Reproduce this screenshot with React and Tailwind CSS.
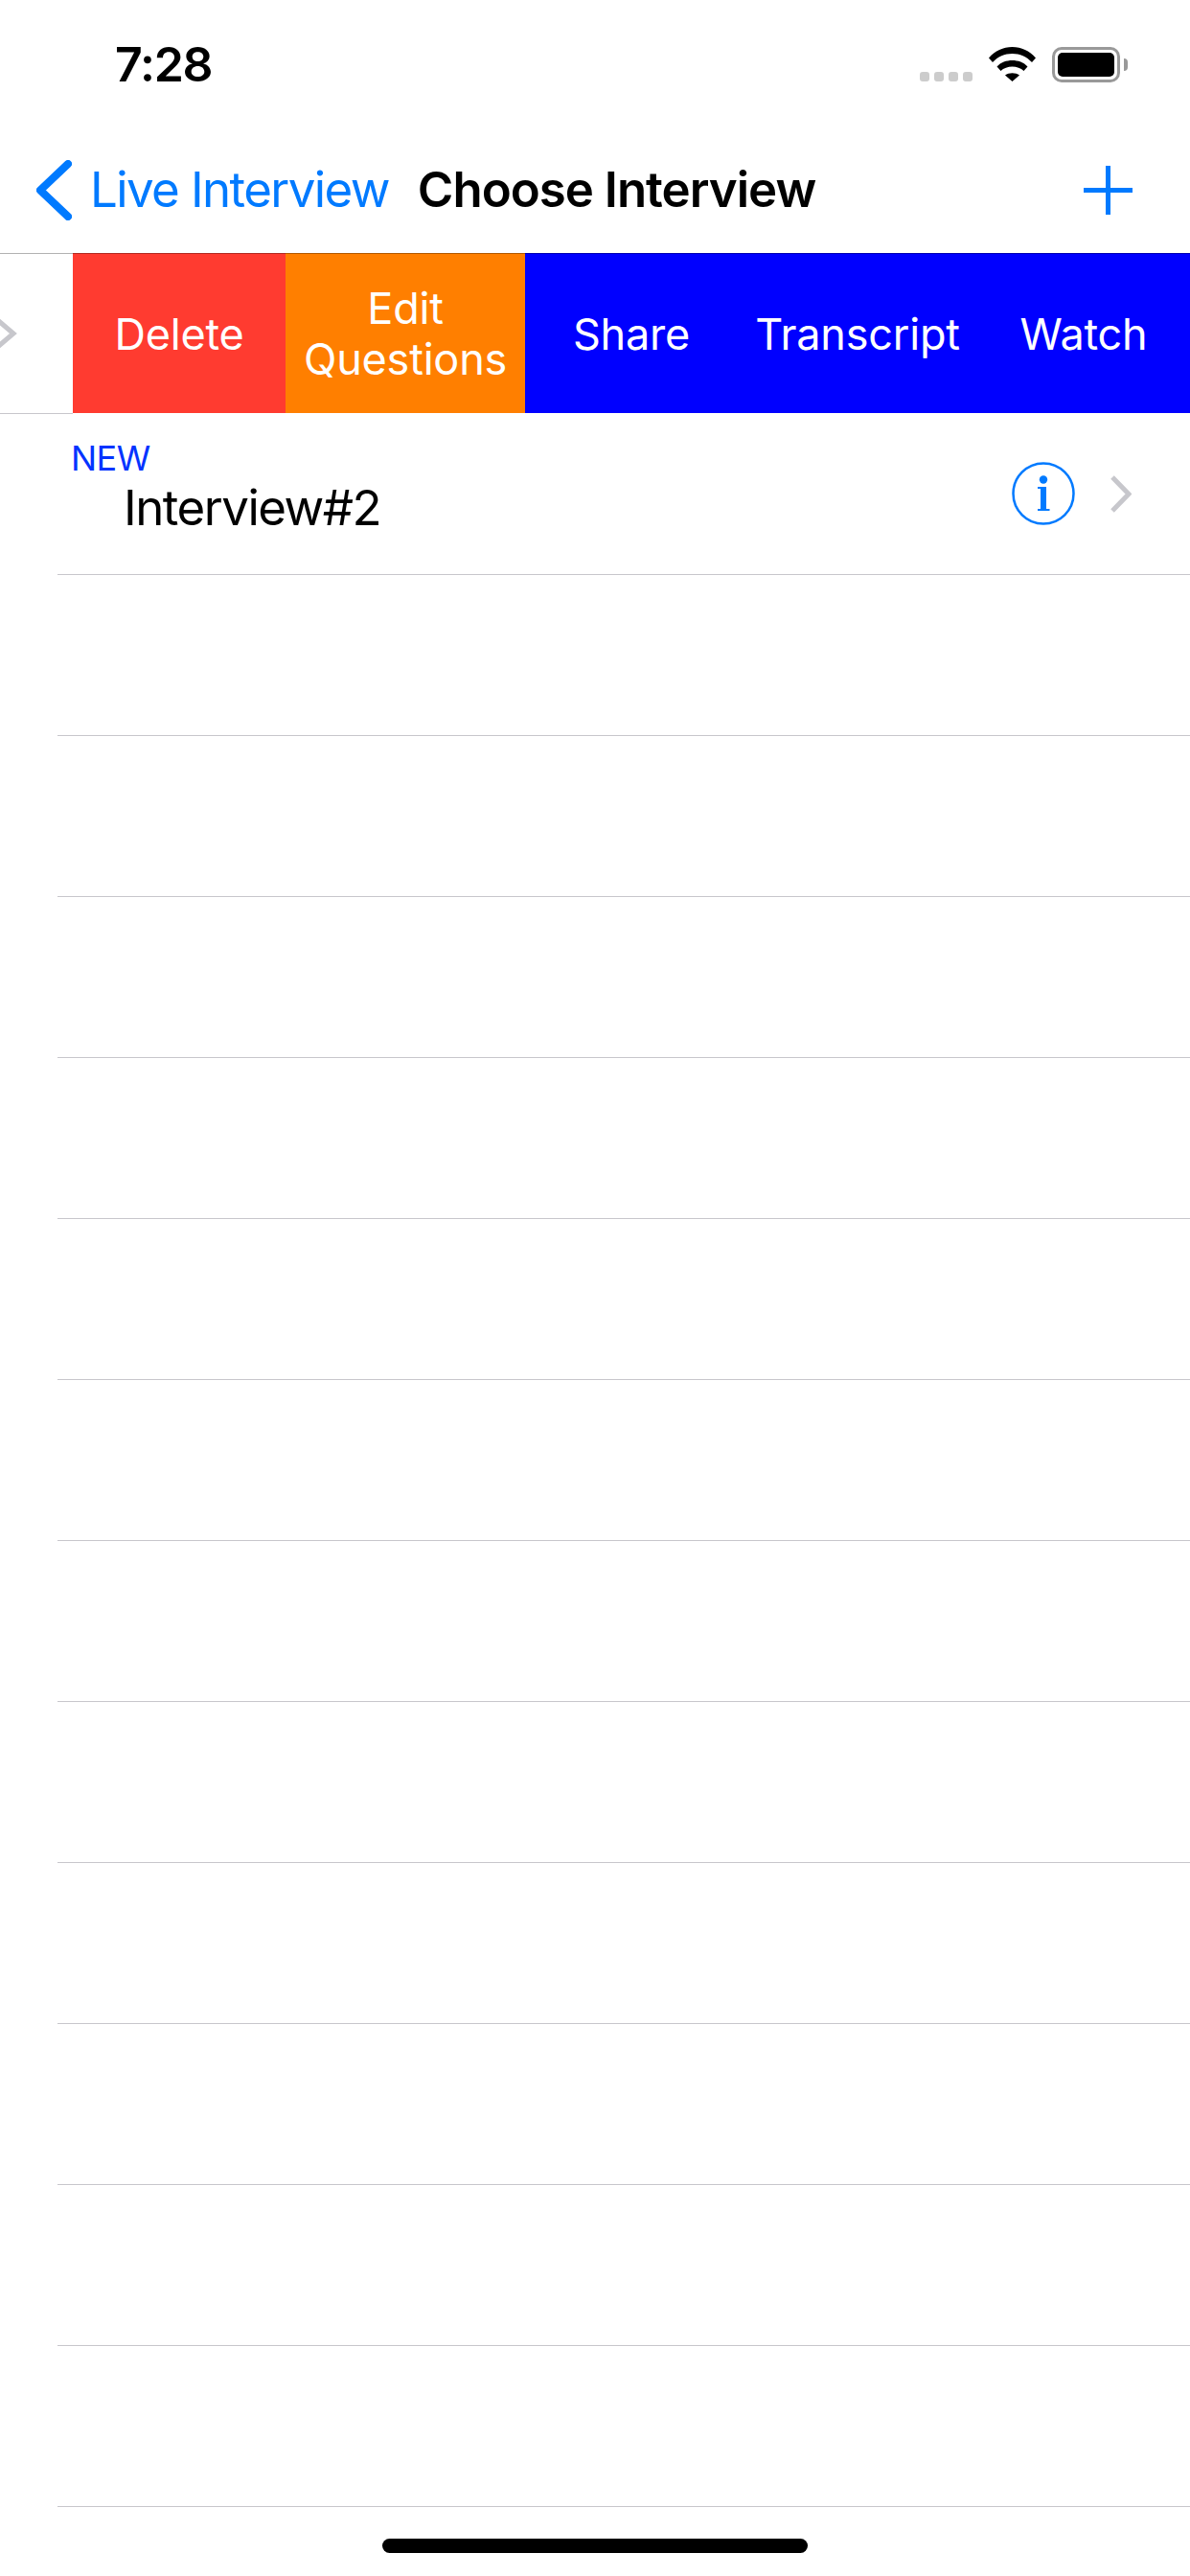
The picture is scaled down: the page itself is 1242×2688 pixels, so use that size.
const actions = [
  { label: 'Delete', color: 'bg-[#ff3b30]', width: 'w-[222px]' },
  { label: 'Edit Questions', color: 'bg-[#ff7f00]', width: 'w-[250px]' },
  { label: 'Share', color: 'bg-[#0000ff]', width: 'w-[222px]' },
  { label: 'Transcript', color: 'bg-[#0000ff]', width: 'w-[250px]' },
  { label: 'Watch', color: 'bg-[#0000ff]', width: 'w-[222px]' },
]

function StatusBar() {
  return (
    <div className="h-[132px] flex items-start pt-[42px] pl-[120px] pr-[65px]">
      <span className="text-[50px] leading-[50px] font-semibold tracking-[-1.2px] text-black">7:28</span>
      <div className="ml-auto flex items-start">
        {/* signal dots */}
        <div className="flex gap-[5px] mt-[33px] mr-[17px]">
          <span className="w-[10px] h-[10px] rounded-[3px] bg-[#cccccc]" />
          <span className="w-[10px] h-[10px] rounded-[3px] bg-[#cccccc]" />
          <span className="w-[10px] h-[10px] rounded-[3px] bg-[#cccccc]" />
          <span className="w-[10px] h-[10px] rounded-[3px] bg-[#cccccc]" />
        </div>
        <svg width="49" height="36" viewBox="0 0 49 36" className="mt-[7px] mr-[17px]" fill="#000">
          <path d="M0 11.5C6.5 4 15 0 24.5 0S42.500 4 49 11.500L45 16C39.500 10 32.500 7 24.500 7S9.500 10 4 16Z" />
          <path d="M8.500 20.500C12.500 16 18.500 14 24.500 14S36.500 16 40.500 20.500L36.500 25C33.500 22 29 20.500 24.500 20.500S15.500 22 12.500 25Z" />
          <path d="M17 29.500C21 26.500 28 26.500 32 29.500L24.500 36Z" />
        </svg>
        <div className="flex items-center mt-[7px]">
          <div className="w-[71px] h-[37px] rounded-[10px] border-[3px] border-[#999999] p-[3px]">
            <div className="w-full h-full rounded-[5px] bg-black" />
          </div>
          <div className="w-[4px] h-[13px] ml-[4px] rounded-r-full bg-[#999999]" />
        </div>
      </div>
    </div>
  )
}

function NavBar() {
  return (
    <div className="h-[132px] flex items-center pl-[38px] pr-[60px]">
      <svg width="37" height="63" viewBox="0 0 37 63" className="mr-[19px]" fill="none" stroke="#007aff" strokeWidth="8" strokeLinecap="round" strokeLinejoin="round">
        <path d="M33 4L4 31.500L33 59" />
      </svg>
      <span className="text-[51px] leading-[60px] tracking-[-1.6px] text-[#007aff]">Live Interview</span>
      <span className="ml-[30px] text-[51px] leading-[60px] font-semibold tracking-[-1px] text-black">Choose Interview</span>
      <svg width="51" height="51" viewBox="0 0 51 51" className="ml-auto" fill="#007aff">
        <rect x="23" y="0" width="5" height="51" />
        <rect x="0" y="23" width="51" height="5" />
      </svg>
    </div>
  )
}

function SwipedRow() {
  return (
    <div className="h-[168px] flex items-start">
      <div className="w-[76px] h-[168px] flex items-center border-t border-b border-t-black/30 border-b-[#c8c7cc] overflow-hidden">
        <svg width="20" height="44" viewBox="0 0 20 44" fill="none" stroke="#c7c7cc" strokeWidth="5">
          <path d="M-6 5L14 22L-6 39" />
        </svg>
      </div>
      {actions.map(a => (
        <div key={a.label} className={`${a.width} ${a.color} h-[167px] border-t border-black/30 flex items-center justify-center text-center text-white text-[45px] leading-[53px] tracking-[-0.2px] px-[12px]`}>
          {a.label}
        </div>
      ))}
    </div>
  )
}

function InterviewRow() {
  return (
    <div className="h-[168px] ml-[60px] border-b border-[#c8c7cc] flex items-center pr-[61px]">
      <div className="ml-[14px] mt-[-15px]">
        <div className="text-[36px] leading-[44px] tracking-[-0.5px] text-[#0433ff]">NEW</div>
        <div className="ml-[55px] text-[51px] leading-[60px] tracking-[-1.5px] text-black">Interview#2</div>
      </div>
      <svg width="66" height="66" viewBox="0 0 66 66" className="ml-auto mt-[-1px] mr-[37px]" fill="#007aff">
        <circle cx="33" cy="33" r="31.500" fill="none" stroke="#007aff" strokeWidth="2.500" />
        <circle cx="33" cy="18.500" r="4.200" />
        <path d="M27 26H36V49H39.500V51H27V49H30V28H27Z" />
      </svg>
      <svg width="22" height="39" viewBox="0 0 22 39" fill="none" stroke="#c7c7cc" strokeWidth="5">
        <path d="M2 2L19 19.500L2 37" />
      </svg>
    </div>
  )
}

export default function App() {
  return (
    <div className="w-[1242px] h-[2688px] bg-white overflow-hidden font-['Inter','Liberation_Sans',sans-serif]">
      <StatusBar />
      <NavBar />
      <SwipedRow />
      <InterviewRow />
      {Array.from({ length: 12 }).map((_, i) => (
        <div key={i} className="h-[168px] ml-[60px] border-b border-[#c8c7cc]" />
      ))}
      <div className="mt-[33px] mx-auto w-[444px] h-[15px] rounded-full bg-black" />
    </div>
  )
}
